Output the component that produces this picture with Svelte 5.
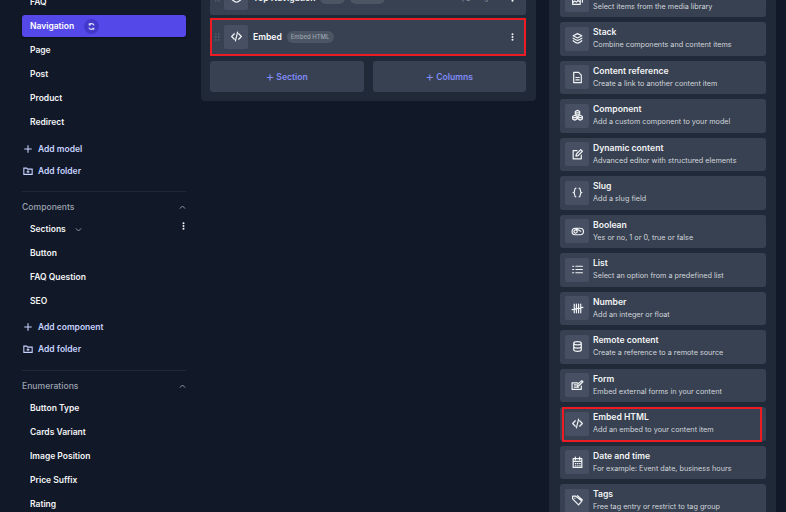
<script>
  const icons = {
    media: 'M3 9h14v10H3z M7 5h14v10 M3 16l4-3 3 2 3-3 4 3',
    stack: 'M12 3l8 4-8 4-8-4z M4 11.5c1 .8 7 4 8 4s7-3.2 8-4 M4 16c1 .8 7 4.5 8 4.5s7-3.7 8-4.5',
    doc: 'M5 2.5h9l5 5v14H5z M9 12h6 M9 16.5h6',
    comp: 'M12 2.5l4 2.2v4.6L12 11.5 8 9.3V4.7z M7 11.5l4 2.2v4.6L7 20.5l-4-2.2v-4.6z M17 11.5l4 2.2v4.6L17 20.5l-4-2.2v-4.6z M8 7h8 M5 16h4 M15 16h4',
    edit: 'M11 5H4v15h15v-7 M9 15l1-4 8-8 3 3-8 8z',
    slug: 'M9 4C6 4 7 9 6 11c-.4 .8-1.2 1-2 1 .8 0 1.6 .2 2 1 1 2 0 7 3 7 M15 4c3 0 2 5 3 7 .4 .8 1.2 1 2 1-.8 0-1.6 .2-2 1-1 2 0 7-3 7',
    bool: 'M8 6h9a6 6 0 0 1 0 12H8A6 6 0 0 1 8 6z M8.5 9a3 3 0 1 0 .01 0z M9 6.5l9 5',
    list: 'M9 6h12 M9 12h12 M9 18h12 M3 6h2 M3 12h2 M3 18h2',
    number: 'M6 4v16 M10 4v16 M14 4v16 M18 4v16 M2 14L22 10',
    db: 'M5 6c0-4 14-4 14 0v12c0 4-14 4-14 0z M5 6c0 4 14 4 14 0 M5 12c0 4 14 4 14 0',
    form: 'M12 7H2v12h17v-6 M6 11h4 M6 15h8 M12 13l1-4 7-6 2 2-7 7z',
    code: 'M8 7l-5 5 5 5 M16 7l5 5-5 5 M14 4l-4 16',
    cal: 'M4 5h16v16H4z M8 2v5 M16 2v5 M4 10h16 M8 14h1 M12 14h1 M16 14h1 M8 18h1 M12 18h1 M16 18h1',
    tag: 'M3 9V4h6l11 9-6 7L3 9z M7 7.5h.5 M12 3l9 8'
  };
  const fields = [
    ['Media', 'Select items from the media library', 'media'],
    ['Stack', 'Combine components and content items', 'stack'],
    ['Content reference', 'Create a link to another content item', 'doc'],
    ['Component', 'Add a custom component to your model', 'comp'],
    ['Dynamic content', 'Advanced editor with structured elements', 'edit'],
    ['Slug', 'Add a slug field', 'slug'],
    ['Boolean', 'Yes or no, 1 or 0, true or false', 'bool'],
    ['List', 'Select an option from a predefined list', 'list'],
    ['Number', 'Add an integer or float', 'number'],
    ['Remote content', 'Create a reference to a remote source', 'db'],
    ['Form', 'Embed external forms in your content', 'form'],
    ['Embed HTML', 'Add an embed to your content item', 'code'],
    ['Date and time', 'For example: Event date, business hours', 'cal'],
    ['Tags', 'Free tag entry or restrict to tag group', 'tag']
  ];
</script>

{#snippet icon(name)}
  <svg class="ic" viewBox="0 0 24 24"><path d={icons[name]} /></svg>
{/snippet}

{#snippet dots()}
  <svg class="dots" viewBox="0 0 4 12"><circle cx="2" cy="1.8" r="1.5" /><circle cx="2" cy="6" r="1.5" /><circle cx="2" cy="10.2" r="1.5" /></svg>
{/snippet}

{#snippet grip()}
  <svg class="grip" viewBox="0 0 6 9"><g><circle cx="1" cy="1" r=".8" /><circle cx="4.5" cy="1" r=".8" /><circle cx="1" cy="4.5" r=".8" /><circle cx="4.5" cy="4.5" r=".8" /><circle cx="1" cy="8" r=".8" /><circle cx="4.5" cy="8" r=".8" /></g></svg>
{/snippet}

{#snippet chev(up)}
  <svg class="chev" viewBox="0 0 12 12"><path d={up ? 'M2.5 7.5L6 4l3.5 3.5' : 'M2.5 4.5L6 8l3.5-3.5'} /></svg>
{/snippet}

{#snippet plus()}
  <svg class="act-ic" viewBox="0 0 12 12"><path d="M6 1.5v9M1.5 6h9" /></svg>
{/snippet}

{#snippet folder()}
  <svg class="act-ic" viewBox="0 0 12 12"><path d="M1 2.5h3.5l1 1.2H11v6.3H1z M6 5v3.5M4.2 6.8h3.6" /></svg>
{/snippet}

{#snippet item(label)}
  <div class="item">{label}</div>
{/snippet}

{#snippet action(kind, label)}
  <div class="action">
    {#if kind === 'plus'}{@render plus()}{:else}{@render folder()}{/if}
    <span>{label}</span>
  </div>
{/snippet}

<div class="page">
  <aside class="sidebar">
    {@render item('FAQ')}
    <div class="item active">
      <span>Navigation</span>
      <span class="sync"><svg viewBox="0 0 12 12"><path d="M9.5 4.5A3.8 3.8 0 0 0 3 3.6M2.5 7.5A3.8 3.8 0 0 0 9 8.4 M3 1.8v2h2 M9 10.2v-2H7" /></svg></span>
    </div>
    {@render item('Page')}
    {@render item('Post')}
    {@render item('Product')}
    {@render item('Redirect')}
    <div class="actions top">
      {@render action('plus', 'Add model')}
      {@render action('folder', 'Add folder')}
    </div>
    <hr />
    <div class="heading"><span>Components</span>{@render chev(true)}</div>
    <div class="item sections">
      <span>Sections</span>{@render chev(false)}
      <span class="sec-dots">{@render dots()}</span>
    </div>
    {@render item('Button')}
    {@render item('FAQ Question')}
    {@render item('SEO')}
    <div class="actions">
      {@render action('plus', 'Add component')}
      {@render action('folder', 'Add folder')}
    </div>
    <hr class="second" />
    <div class="heading"><span>Enumerations</span>{@render chev(true)}</div>
    <div class="enum">
      {@render item('Button Type')}
      {@render item('Cards Variant')}
      {@render item('Image Position')}
      {@render item('Price Suffix')}
      {@render item('Rating')}
    </div>
  </aside>

  <main class="panel">
    <div class="row first">
      {@render grip()}
      <div class="box">{@render icon('stack')}</div>
      <span class="name">Top Navigation</span>
      <span class="chip plain">Field</span>
      <span class="chip plain wide">Stack</span>
      <span class="api">top_navigation</span>
      {@render dots()}
    </div>
    <div class="row marked">
      {@render grip()}
      <div class="box">{@render icon('code')}</div>
      <span class="name">Embed</span>
      <span class="chip">Embed HTML</span>
      <span class="api"></span>
      {@render dots()}
    </div>
    <div class="buttons">
      <div class="btn"><span class="p">+</span> Section</div>
      <div class="btn"><span class="p">+</span> Columns</div>
    </div>
  </main>

  <section class="fields">
    {#each fields as f}
      <div class="field">
        <div class="box">{@render icon(f[2])}</div>
        <div class="txt">
          <div class="t">{f[0]}</div>
          <div class="d">{f[1]}</div>
        </div>
        {#if f[0] === 'Embed HTML'}<div class="mark"></div>{/if}
      </div>
    {/each}
  </section>
</div>

<style>
  :global(body) { margin: 0; background: #111827; }
  .page {
    width: 786px; height: 512px; overflow: hidden; display: flex; align-items: flex-start;
    background: #111827; font-family: Inter, "Liberation Sans", sans-serif; color: #f3f4f6;
  }
  .sidebar { width: 164px; margin: -9px 15px 0 22px; flex: none; }
  .item {
    height: 22px; margin-bottom: 2px; padding-left: 8px; display: flex; align-items: center;
    font-size: 8.5px; font-weight: 600; color: #f3f4f6; border-radius: 3px;
  }
  .active { background: #5548e8; color: #fff; box-shadow: 0 1px 2px #0006; gap: 10px; }
  .sync {
    width: 15px; height: 15px; border-radius: 50%; background: #4338ca;
    display: flex; align-items: center; justify-content: center;
  }
  .sync svg { width: 9px; height: 9px; fill: none; stroke: #e0e7ff; stroke-width: 1.4; }
  .actions { margin-top: 4px; }
  .actions.top { margin-top: 5px; }
  .action {
    height: 22px; display: flex; align-items: center; gap: 5px; padding-left: 1px;
    font-size: 8.5px; font-weight: 600; color: #c7d2fe;
  }
  .act-ic { width: 10px; height: 10px; fill: none; stroke: #c7d2fe; stroke-width: 1.3; flex: none; }
  hr { border: 0; height: 1px; background: #1f2937; margin: 9px 0 7px; }
  hr.second { margin: 10px 0 7px; }
  .heading {
    height: 16px; display: flex; align-items: center; justify-content: space-between;
    font-size: 8.6px; font-weight: 500; color: #9ca3af; margin-bottom: 3px;
  }
  .chev { width: 9px; height: 9px; fill: none; stroke: #9ca3af; stroke-width: 1.2; flex: none; margin-right: -1px; }
  .sections { position: relative; gap: 8px; }
  .sec-dots { position: absolute; right: 1.5px; top: 4px; }
  .enum { margin-top: 3px; }
  .dots { width: 3px; height: 8px; fill: #f3f4f6; flex: none; display: block; }
  .panel {
    width: 316px; flex: none; margin-top: -30px; padding: 7.5px 10px 9px 9px; background: #1f2937;
    border-radius: 4px; display: flex; flex-direction: column; gap: 3px;
  }
  .row {
    height: 37px; box-sizing: border-box; background: #374151; border-radius: 3px; position: relative;
    display: flex; align-items: center; padding: 0 12px 0 5px;
  }
  .first { padding-top: 3px; }
  .marked { height: 38px; outline: 2px solid #ed1c24; outline-offset: -2px; border-radius: 0; }
  .grip { width: 5px; height: 8px; fill: #6b7280; flex: none; margin-right: 4px; }
  .box {
    width: 24px; height: 24px; border-radius: 2px; background: #465062; flex: none;
    display: flex; align-items: center; justify-content: center;
  }
  .ic {
    width: 13px; height: 13px; fill: none; stroke: #f3f4f6; stroke-width: 2.2;
    stroke-linecap: round; stroke-linejoin: round;
  }
  .name { font-size: 8.6px; font-weight: 600; color: #f9fafb; margin-left: 5px; }
  .chip {
    margin-left: 5px; height: 12px; padding: 0 4px; border-radius: 6px; background: #4b5563;
    font-size: 6px; font-weight: 500; color: #9ca3af; display: flex; align-items: center;
  }
  .plain { color: #9ca3af; min-width: 17px; justify-content: center; }
  .plain.wide { min-width: 27px; }
  .api { margin-left: auto; margin-right: 6px; font-size: 7.2px; color: #9ca3af; }
  .buttons { display: grid; grid-template-columns: 1fr 1fr; gap: 9px; margin-top: 2.5px; }
  .btn {
    height: 31px; background: #374151; border-radius: 3px; display: flex; align-items: center;
    justify-content: center; gap: 2px; font-size: 8.6px; font-weight: 600; color: #818cf8;
  }
  .p { font-size: 13px; font-weight: 400; line-height: 1; }
  .fields {
    width: 206px; flex: none; margin: -16.5px 0 0 13px; padding: 0 10px 20px 11px; background: #1f2937;
    display: flex; flex-direction: column; gap: 5px;
  }
  .field {
    height: 33.5px; flex: none; background: #374151; border-radius: 3px; position: relative;
    display: flex; align-items: center; padding-left: 5px; gap: 4px;
  }
  .t { font-size: 8.6px; font-weight: 600; color: #f3f4f6; line-height: 12px; }
  .d { font-size: 7.25px; font-weight: 400; color: #d1d5db; line-height: 12px; margin-top: 1px; white-space: nowrap; }
  .mark { position: absolute; left: 1.5px; right: 4.5px; top: 0; bottom: -1px; border: 2px solid #ed1c24; }
</style>
